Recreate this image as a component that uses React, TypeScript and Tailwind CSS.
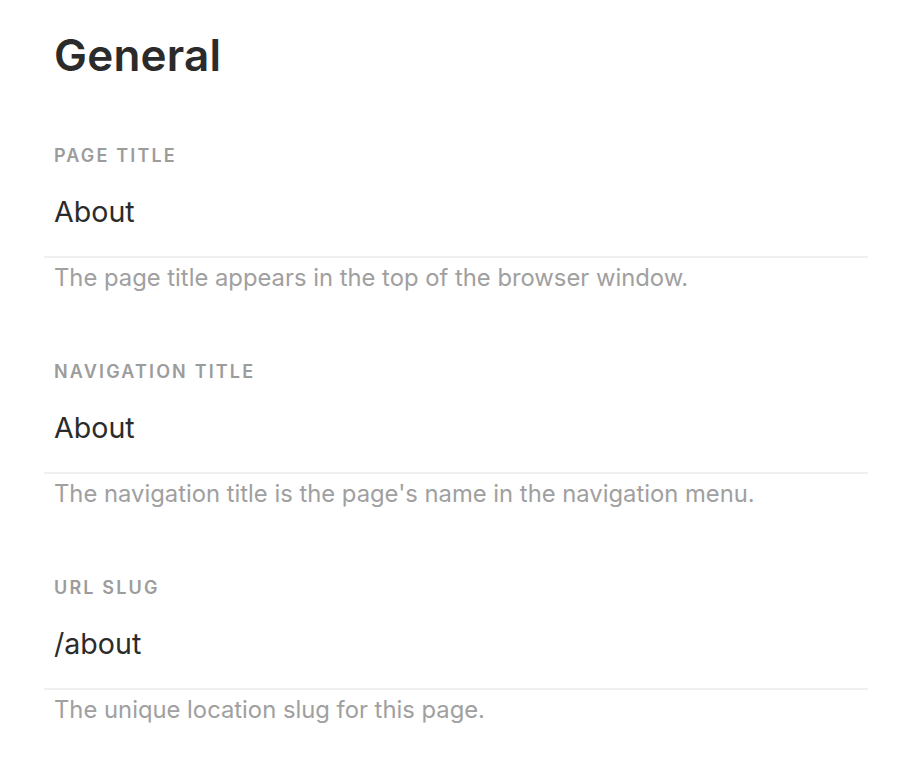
const fields = [
  {
    label: "Page Title",
    value: "About",
    help: "The page title appears in the top of the browser window.",
  },
  {
    label: "Navigation Title",
    value: "About",
    help: "The navigation title is the page's name in the navigation menu.",
  },
  {
    label: "URL Slug",
    value: "/about",
    help: "The unique location slug for this page.",
  },
];

export default function App() {
  return (
    <div className="min-h-screen bg-white pl-[44px] pr-[42px] pt-[27px] font-['Inter','Liberation_Sans',sans-serif]">
      {/* Heading */}
      <h1 className="pl-[10px] text-[44px] font-semibold leading-[56px] tracking-[0.005em] text-[#2b2b2b]">
        General
      </h1>

      {/* Fields */}
      <div className="mt-[61px] flex flex-col gap-[66px]">
        {fields.map((field) => (
          <div key={field.label}>
            <p className="pl-[10px] text-[18px] font-semibold uppercase leading-[24px] tracking-[0.12em] text-[#9c9c9c]">
              {field.label}
            </p>

            <div className="mt-[26px] border-b-2 border-[#efefef] pb-[26px] pl-[10px]">
              <p className="text-[28.6px] leading-[36px] text-[#2b2b2b]">
                {field.value}
              </p>
            </div>

            <p className="mt-[4px] pl-[10px] text-[23.8px] leading-[32px] text-[#a0a0a0]">
              {field.help}
            </p>
          </div>
        ))}
      </div>
    </div>
  );
}
